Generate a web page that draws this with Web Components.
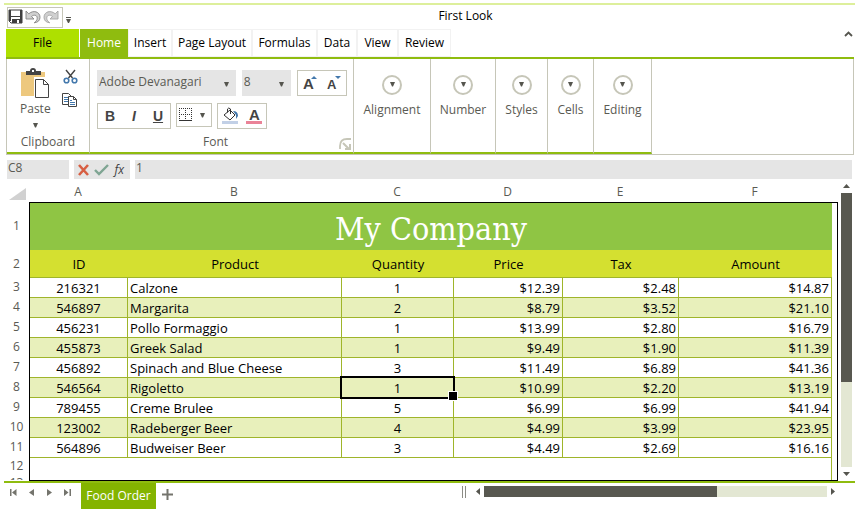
<!DOCTYPE html>
<html lang="en">
<head>
<meta charset="utf-8">
<title>First Look</title>
<style>
html,body{height:100%;margin:0}
body{background:#fff;color:#000;font:12px/16px "Open Sans","Noto Sans",sans-serif;
--green:#8fbc0f;--edge:#c6c6b8;--ink:#5a5a53;--field:#e5e5e5}
</style>
</head>
<body>
<spread-app></spread-app>
<script>
const RESET = `*{box-sizing:border-box}
button,input,select{font:inherit;color:inherit;background:none;border:0;padding:0;margin:0;border-radius:0;outline:0}
svg{display:block}
button{display:flex;align-items:center;justify-content:center}`;

class Base extends HTMLElement {
  constructor() {
    super();
    this.attachShadow({ mode: "open" });
  }
  connectedCallback() {
    this.shadowRoot.innerHTML = `<style>${RESET}${this.css()}</style>${this.html()}`;
  }
  css() { return ""; }
  html() { return ""; }
}

const ARROW = `<svg width="5" height="5" viewBox="0 0 5 5"><path d="M0 0h5L3 4.500H2z" fill="#55554e"/></svg>`;

class TitleBar extends Base {
  css() { return `:host{display:flex;align-items:center;height:26px;border-top:2px solid #ddef9b;padding:0 2px 0 3px}
  .left{display:flex;align-items:center;gap:3px}
  .qat{display:flex;border:1px solid #c6c6b8;height:21px;width:56px;align-items:center;gap:2px;padding-right:3px}
  .more{padding-top:6px}
  h1{flex:1;text-align:center;font:inherit;margin:0;padding:0 0 3px 7px}`; }
  html() { return `<div class="left"><div class="qat">
    <button aria-label="Save"><svg width="15" height="16" viewBox="0 0 15 16"><path d="M1 1h13v13H3l-2-2z" fill="#fff" stroke="#3f3f3f"/><path d="M1 1h2v11H1zM3 7h9v1H3zM12 1h2v13h-2zM4 10h8v4H4z" fill="#3f3f3f"/><path d="M9 11h2v3H9z" fill="#fff"/></svg></button>
    <button aria-label="Undo"><svg width="16" height="14" viewBox="0 0 16 14"><path d="M1 1v8h8L6.500 6.500C9 4.300 12.300 5 12.200 8.300c0 2-1.500 3.300-3 4.500C13 12.500 15 10.300 15 7.300 15 1.500 8-.2 3.800 3.800z" fill="#d0d0d0" stroke="#858585" stroke-width=".9"/></svg></button>
    <button aria-label="Redo"><svg width="16" height="14" viewBox="0 0 16 14"><path d="M15 1v8H7l2.500-2.500C7 4.300 3.700 5 3.800 8.300c0 2 1.500 3.300 3 4.500C3 12.500 1 10.300 1 7.300 1 1.500 8-.2 12.200 3.800z" fill="#d0d0d0" stroke="#a5a5a5" stroke-width=".9"/></svg></button>
  </div><button class="more" aria-label="Customize"><svg width="5" height="6" viewBox="0 0 5 6"><path d="M0 0h5v1H0zM0 2h5L3 6H2z" fill="#55554e"/></svg></button></div>
  <h1>First Look</h1>`; }
}
customElements.define("title-bar", TitleBar);

class RibbonTabs extends Base {
  css() { return `:host{display:flex;height:30px;margin:0 1px 0 2px;border-bottom:2px solid var(--green)}
  button{height:28px;border:1px solid #f2f2f2;padding:0;white-space:nowrap;flex:none}
  .file{background:#aee000;border-color:#aee000;width:73px;margin-right:1px}
  .on{background:var(--green);border-color:var(--green);color:#fff}
  .up{border:0;margin-left:auto;align-items:flex-start;padding:2px 1px}`; }
  html() {
    const tabs = [["Home", 48], ["Insert", 44], ["Page Layout", 80], ["Formulas", 65], ["Data", 40], ["View", 41], ["Review", 53]];
    return `<button class="file">File</button>` + tabs.map(([t, w], i) =>
      `<button class="${i ? "" : "on"}" style="width:${w}px">${t}</button>`).join("") +
      `<button class="up" aria-label="Collapse ribbon"><svg width="9" height="6" viewBox="0 0 9 6"><path d="M1 5l3.500-3.500L8 5" fill="none" stroke="#55554e" stroke-width="1.800"/></svg></button>`;
  }
}
customElements.define("ribbon-tabs", RibbonTabs);

class RibbonGroup extends Base {
  css() { return `:host{display:flex;flex-direction:column;flex:none;border-right:1px solid var(--edge);border-bottom:2px solid var(--green);color:var(--ink);position:relative}
  .body{flex:1}
  .label{text-align:center;line-height:20px}
  :host([launcher]) .label{padding-right:12px}
  .launch{position:absolute;right:2px;bottom:2px}`; }
  html() { return `<div class="body"><slot></slot></div><div class="label">${this.getAttribute("label")}</div>` +
    (this.hasAttribute("launcher") ? `<button class="launch" aria-label="Font settings"><svg width="12" height="12" viewBox="0 0 12 12"><path d="M1 11V8Q1 1 8 1h4" fill="none" stroke="#c6c6b8" stroke-width="1.800"/><path d="M4 5l6 6M11 6v5H6" fill="none" stroke="#c6c6b8" stroke-width="2"/></svg></button>` : ""); }
}
customElements.define("ribbon-group", RibbonGroup);

class CollapsedGroup extends Base {
  css() { return `:host{display:flex;flex:none;border-right:1px solid var(--edge);border-bottom:2px solid var(--green);color:var(--ink)}
  button{flex:1;flex-direction:column;justify-content:flex-start;padding-top:16px;gap:7px}
  i{display:flex;justify-content:center;width:20px;height:20px;border:2px solid #c6c6b8;border-radius:50%;padding-top:5px}`; }
  html() { return `<button><i>${ARROW}</i><slot></slot></button>`; }
}
customElements.define("collapsed-group", CollapsedGroup);

class ClipboardTools extends Base {
  css() { return `:host{display:flex;padding:9px 11px 0 13px;justify-content:space-between}
  .paste{flex-direction:column;justify-content:flex-start}
  .paste span{padding:2px 0 6px}
  .side{display:flex;flex-direction:column;gap:8px;padding-top:1px}`; }
  html() { return `<button class="paste"><svg width="30" height="31" viewBox="0 0 30 31">
   <path d="M1 4h24v24H1z" fill="#edc87e"/><path d="M6 7V3h4q0-3 3-3t3 3h5v4z" fill="#444"/><path d="M12 2h2v2h-2z" fill="#fff"/>
   <path d="M14 9h15v21H14z" fill="#fff"/><path d="M15.500 11.500h8l5 5v13h-13z" fill="#fff" stroke="#444"/><path d="M23.500 11.500v5h5" fill="none" stroke="#444"/></svg>
   <span>Paste</span>${ARROW}</button>
   <div class="side"><button aria-label="Cut"><svg width="15" height="16" viewBox="0 0 15 16"><path d="M3 1l6.500 8M12 1L5.500 9" stroke="#444" stroke-width="1.400" fill="none"/><circle cx="3.500" cy="11.500" r="2.300" fill="none" stroke="#4378ac" stroke-width="1.600"/><circle cx="11.500" cy="11.500" r="2.300" fill="none" stroke="#4378ac" stroke-width="1.600"/></svg></button>
   <button aria-label="Copy"><svg width="16" height="15" viewBox="0 0 16 15"><path d="M.5.5h6l3 3v8h-9z" fill="#fff" stroke="#444"/><path d="M2 4.500h4M2 6.500h4M2 8.500h4" stroke="#4378ac"/><path d="M6.500 3.500h5l3 3v7h-8z" fill="#fff" stroke="#444"/><path d="M11.500 3.500v3h3" fill="none" stroke="#444"/><path d="M8 7.500h2M8 9.500h5M8 11.500h5" stroke="#4378ac"/></svg></button></div>`; }
}
customElements.define("clipboard-tools", ClipboardTools);

class ComboBox extends Base {
  css() { return `:host{display:flex;position:relative;height:26px;background:var(--field)}
  select{appearance:none;width:100%;padding:0 20px 2px 2px;line-height:16px}
  svg{position:absolute;right:7px;top:12px;pointer-events:none}`; }
  html() { return `<select aria-label="${this.getAttribute("label")}"><option>${this.getAttribute("value")}</option></select>${ARROW}`; }
}
customElements.define("combo-box", ComboBox);

class FontTools extends Base {
  css() { return `:host{display:flex;flex-direction:column;gap:7px;padding:11px 6px 0 7px}
  .row{display:flex;gap:6px;align-items:flex-start}
  .row+.row{gap:5px}
  .box{display:flex;height:26px;border:1px solid var(--edge);width:50px}
  .box button{flex:1}
  .biu{width:74px;font:bold 14px/20px "Liberation Sans",sans-serif;color:#444}
  .bord{width:36px;height:24px}
  .name{width:140px}.size{width:50px}`; }
  html() {
    const letter = (size, x, y, d, fill) => `<svg width="18" height="20" viewBox="0 0 18 20"><text x="${x}" y="${y}" font-family="Liberation Sans" font-weight="700" font-size="${size}" fill="#444">A</text><path d="${d}" fill="${fill}"/></svg>`;
    return `<div class="row"><combo-box class="name" label="Font name" value="Adobe Devanagari"></combo-box><combo-box class="size" label="Font size" value="8"></combo-box>
    <div class="box"><button aria-label="Grow font">${letter(15, 2, 16, "M10 6l3-3 3 3z", "#4378ac")}</button><button aria-label="Shrink font">${letter(13, 2, 16, "M10 3h6l-3 3z", "#4378ac")}</button></div></div>
    <div class="row"><div class="box biu"><button>B</button><button><em>I</em></button><button><u>U</u></button></div>
    <div class="box bord"><button aria-label="Borders"><svg width="14" height="14" viewBox="0 0 14 14"><path d="M0 .5h13M0 6.500h13M.5 0v12M6.500 0v12M12.500 0v12" stroke="#333" stroke-dasharray="1 1"/><path d="M0 12.500h13" stroke="#333"/></svg></button><button aria-label="Border options">${ARROW}</button></div>
    <div class="box"><button aria-label="Fill colour"><svg width="18" height="20" viewBox="0 0 18 20"><path d="M3 9l6-5 5 5-5 5z" fill="#fff" stroke="#333"/><path d="M6.500 6.500V3q1-2 3 0v5" fill="none" stroke="#333"/><path d="M12 5q5 0 5 5l-2 3V9z" fill="#4378ac"/><path d="M1 15h16v3H1z" fill="#c2d0e6"/></svg></button>
    <button aria-label="Font colour">${letter(15, 4, 14, "M1 15h16v3H1z", "#ea8397")}</button></div></div>`;
  }
}
customElements.define("font-tools", FontTools);

class RibbonPanel extends Base {
  css() { return `:host{display:flex;height:96px;margin:0 1px 0 2px;border:solid var(--edge);border-width:0 1px 1px}`; }
  html() { return `<ribbon-group label="Clipboard" style="width:83px"><clipboard-tools></clipboard-tools></ribbon-group>
  <ribbon-group label="Font" launcher style="width:264px"><font-tools></font-tools></ribbon-group>` +
  [["Alignment", 77], ["Number", 65], ["Styles", 52], ["Cells", 46], ["Editing", 58]].map(([t, w]) => `<collapsed-group style="width:${w}px">${t}</collapsed-group>`).join(""); }
}
customElements.define("ribbon-panel", RibbonPanel);

class FormulaBar extends Base {
  css() { return `:host{display:flex;gap:5px;height:19px;margin:5px 3px 0 3px;color:var(--ink)}
  input{background:var(--field);padding:0 1px 3px}
  .name{width:62px}.value{flex:1;min-width:0}
  .tools{display:flex;width:56px;justify-content:space-between;background:var(--field);padding:0 6px 0 4px}
  em{font-size:12px;color:#3f3f3f}`; }
  html() { return `<input class="name" aria-label="Name box" value="C8"><div class="tools">
   <button aria-label="Cancel"><svg width="11" height="12" viewBox="0 0 11 12"><path d="M1 1l9 10M10 1L1 11" stroke="#d75f43" stroke-width="2.600"/></svg></button>
   <button aria-label="Enter"><svg width="15" height="12" viewBox="0 0 15 12"><path d="M1 6l4 4 9-9" fill="none" stroke="#7fa593" stroke-width="2.400"/></svg></button>
   <button aria-label="Insert function"><em>fx</em></button></div>
   <input class="value" aria-label="Formula" value="1">`; }
}
customElements.define("formula-bar", FormulaBar);

class ScrollBar extends Base {
  css() { return `:host{display:flex;align-items:center}
  .track{flex:1;display:flex;background:#e3e7d3}
  .thumb{background:#585850}
  :host([vertical]){flex-direction:column;width:11px}
  :host([vertical]) .track{flex-direction:column;width:11px}
  :host([vertical]) .thumb{height:69%}
  :host(:not([vertical])) .track{height:11px}
  :host(:not([vertical])) .thumb{width:68%}
  :host([vertical]) button{height:14px}
  :host(:not([vertical])) button{width:12px}
  :host([vertical]) .next{height:14px}`; }
  html() {
    const v = this.hasAttribute("vertical");
    const a = v ? ["M0 4l3.500-4L7 4z", "M0 0h7L3.500 4z"] : ["M4 0v7L0 3.500z", "M0 0l4 3.500L0 7z"];
    const s = d => `<svg width="${v ? 7 : 4}" height="${v ? 4 : 7}"><path d="${d}" fill="#55554e"/></svg>`;
    return `<button aria-label="Scroll back">${s(a[0])}</button><div class="track"><div class="thumb"></div></div><button class="next" aria-label="Scroll forward">${s(a[1])}</button>`;
  }
}
customElements.define("scroll-bar", ScrollBar);

class SheetGrid extends Base {
  css() { return `:host{display:flex;flex:1;min-height:0;padding:0 3px 0 1px}
  .view{flex:1;min-width:0;display:flex;flex-direction:column}
  .clip{flex:1;min-height:0;overflow:hidden}
  .base{height:1px;background:#000;margin-left:24px}
  table{width:100%;table-layout:fixed;border-collapse:separate;border-spacing:0;font-size:13px;line-height:16px}
  th,td{padding:0;font-weight:400;white-space:nowrap}
  thead th{height:23px;color:var(--ink);font-size:12px;padding:3px 2px 0 0}
  thead svg{margin:4px 0 0 4px}
  tbody th{color:var(--ink);font-size:12px;border-right:1px solid #000;text-align:center;padding:0 1px 2px 0}
  .title th,.head th{padding-bottom:0}
  tr>:last-child{border-right:1px solid #000}
  thead tr>:last-child{border:0}
  .title>*{height:48px}
  .title td{border-top:1px solid #000}
  .title .t{background:#8fc544;color:#fff;font:32px/40px "DejaVu Serif Condensed","Liberation Serif",serif;text-align:center;padding-top:4px}
  .head>*{height:28px}
  .head .h{background:#d4e030;text-align:center;border-bottom:1px solid #9fb52a}
  .data>*{height:20px}
  .data .c{border:solid #9fb52a;border-width:0 1px 1px 0;padding:1px 2px;line-height:16px}
  .alt .c{background:#e8f0bb}
  .m{text-align:center}.r{text-align:right}
  .free>*{height:17px}
  .free th{line-height:15px}
  .free .f{border-right:1px solid #9fb52a}
  .active{position:relative}
  .active::before{content:"";position:absolute;inset:-2px;border:2px solid #000}
  .active::after{content:"";position:absolute;right:-5px;bottom:-4px;width:8px;height:8px;background:#000;border:1px solid #fff}
  scroll-bar{margin:0 0 0 3px}`; }
  html() {
    const rows = [
      ["216321", "Calzone", 1, "$12.39", "$2.48", "$14.87"],
      ["546897", "Margarita", 2, "$8.79", "$3.52", "$21.10"],
      ["456231", "Pollo Formaggio", 1, "$13.99", "$2.80", "$16.79"],
      ["455873", "Greek Salad", 1, "$9.49", "$1.90", "$11.39"],
      ["456892", "Spinach and Blue Cheese", 3, "$11.49", "$6.89", "$41.36"],
      ["546564", "Rigoletto", 1, "$10.99", "$2.20", "$13.19"],
      ["789455", "Creme Brulee", 5, "$6.99", "$6.99", "$41.94"],
      ["123002", "Radeberger Beer", 4, "$4.99", "$3.99", "$23.95"],
      ["564896", "Budweiser Beer", 3, "$4.49", "$2.69", "$16.16"]];
    const align = ["m", "", "m", "r", "r", "r"];
    return `<div class="view"><div class="clip"><table><colgroup><col style="width:25px"><col style="width:98px"><col style="width:214px"><col style="width:112px"><col style="width:109px"><col style="width:116px"><col><col style="width:6px"></colgroup>
    <thead><tr><th aria-label="Select all"><svg width="17" height="12"><path d="M17 0v12H0z" fill="#d1d1d1"/></svg></th>${[..."ABCDEF"].map(c => `<th scope="col">${c}</th>`).join("")}<th></th></tr></thead>
    <tbody><tr class="title"><th scope="row">1</th><td class="t" colspan="6">My Company</td><td></td></tr>
    <tr class="head"><th scope="row">2</th>${["ID", "Product", "Quantity", "Price", "Tax", "Amount"].map(t => `<td class="h">${t}</td>`).join("")}<td></td></tr>
    ${rows.map((r, i) => `<tr class="data ${i % 2 ? "alt" : ""}"><th scope="row">${i + 3}</th>${r.map((v, j) => `<td class="c ${align[j]} ${i === 5 && j === 2 ? "active" : ""}">${v}</td>`).join("")}<td></td></tr>`).join("")}
    ${[12, 13].map(n => `<tr class="free"><th scope="row">${n}</th><td class="f" colspan="6"></td><td></td></tr>`).join("")}
    </tbody></table></div><div class="base"></div></div><scroll-bar vertical></scroll-bar>`;
  }
}
customElements.define("sheet-grid", SheetGrid);

class SheetFooter extends Base {
  css() { return `:host{display:flex;height:28px;border-top:2px solid var(--green);color:#74746d}
  .nav{display:flex;width:77px;padding:0 10px 8px 6px;justify-content:space-between}
  .tab{background:#84b400;color:#fff;width:75px;height:26px}
  .add{padding:0 0 3px 6px}
  .hold{margin-left:auto;display:flex;align-items:flex-start;padding-top:3px;width:calc(50% - 48px);margin-right:16px}
  .grip{width:4px;height:12px;border:solid #8c8c86;border-width:0 1px;margin-right:6px}
  scroll-bar{flex:1}`; }
  html() {
    const n = (l, w, d) => `<button aria-label="${l}"><svg width="${w}" height="7"><path d="${d}" fill="#74746d"/></svg></button>`;
    return `<div class="nav">${n("First sheet", 7, "M0 0h1.500v7H0zM6.500 0v7L2 3.500z")}${n("Previous sheet", 5, "M5 0v7L0 3.500z")}${n("Next sheet", 5, "M0 0l5 3.500L0 7z")}${n("Last sheet", 7, "M0 0l4.500 3.500L0 7zM5.500 0H7v7H5.500z")}</div>
    <button class="tab">Food Order</button>
    <button class="add" aria-label="Add sheet"><svg width="11" height="11"><path d="M4.500 0h2v4.500H11v2H6.500V11h-2V6.500H0v-2h4.500z" fill="#74746d"/></svg></button>
    <div class="hold"><span class="grip"></span><scroll-bar></scroll-bar></div>`;
  }
}
customElements.define("sheet-footer", SheetFooter);

class SpreadApp extends Base {
  css() { return `:host{display:flex;flex-direction:column;height:100vh;padding:3px 6px 0 4px;box-sizing:border-box}
  sheet-footer{flex:none}`; }
  html() { return `<title-bar></title-bar><ribbon-tabs></ribbon-tabs><ribbon-panel></ribbon-panel><formula-bar></formula-bar><sheet-grid></sheet-grid><sheet-footer></sheet-footer>`; }
}
customElements.define("spread-app", SpreadApp);
</script>
</body>
</html>
